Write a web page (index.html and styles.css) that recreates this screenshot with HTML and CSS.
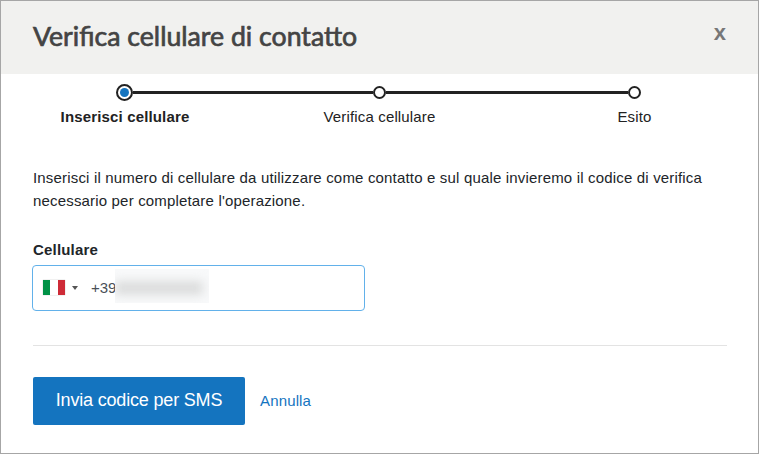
FILE: index.html
```html
<!DOCTYPE html>
<html lang="it">
<head>
<meta charset="utf-8">
<title>Verifica cellulare di contatto</title>
<link rel="stylesheet" href="styles.css">
</head>
<body>
<main class="dialog">
  <header class="header">
    <h1 class="title">Verifica cellulare di contatto</h1>
    <button class="close" type="button">x</button>
  </header>
  <ol class="stepper">
    <li class="step current"><div class="track"><span class="dot"></span></div><span class="label">Inserisci cellulare</span></li>
    <li class="step"><div class="track"><span class="dot"></span></div><span class="label">Verifica cellulare</span></li>
    <li class="step"><div class="track"><span class="dot"></span></div><span class="label">Esito</span></li>
  </ol>
  <section class="content">
    <p class="intro">Inserisci il numero di cellulare da utilizzare come contatto e sul quale invieremo il codice di verifica<br>necessario per completare l'operazione.</p>
    <div class="field-label">Cellulare</div>
    <div class="field">
      <span class="flag"></span>
      <span class="caret"></span>
      <span class="prefix">+39</span>
      <span class="masked"><span class="smudge"></span></span>
    </div>
    <footer class="actions">
      <button class="submit" type="button">Invia codice per SMS</button>
      <a class="cancel">Annulla</a>
    </footer>
  </section>
</main>
</body>
</html>
```
FILE: styles.css
```css
* { box-sizing: border-box; }
body {
  margin: 0;
  font: 15px/23px "Liberation Sans", Arial, sans-serif;
  color: #212529;
}
.dialog {
  width: 759px;
  height: 454px;
  border: 1px solid #a6a6a6;
  background: #fff;
  overflow: hidden;
}
.header {
  display: flex;
  justify-content: space-between;
  height: 73px;
  padding: 15px 32px 0 32px;
  background: #f1f1ef;
}
.title {
  margin: 0;
  font: 400 26.67px/40px Lato, sans-serif;
  color: #444;
  -webkit-text-stroke: 0.7px #444;
}
.close {
  height: 34px;
  padding: 0;
  border: 0;
  background: none;
  font: bold 22px/32px "Liberation Sans", Arial, sans-serif;
  color: #777;
}
.stepper {
  display: grid;
  grid-template-columns: repeat(3, 255px);
  margin: 0 -4px;
  padding: 9px 0 0;
  list-style: none;
  color: #222;
}
.step { text-align: center; }
.track {
  display: grid;
  grid-template-columns: 1fr auto 1fr;
  align-items: center;
  height: 19px;
}
.track::before, .track::after {
  content: "";
  height: 3px;
  background: #222;
}
.step:first-child .track::before, .step:last-child .track::after { background: none; }
.dot {
  width: 13px;
  height: 13px;
  border: 2px solid #222;
  border-radius: 50%;
  background: #fff;
}
.current .dot {
  width: 17px;
  height: 17px;
  padding: 2px;
  background: #1474bf content-box;
}
.label {
  display: block;
  margin-top: 3px;
  letter-spacing: 0.15px;
}
.current .label { padding-left: 1px; font-weight: bold; }
.content { padding: 38px 31px 0 32px; }
.intro {
  margin: 0;
  letter-spacing: 0.172px;
  white-space: nowrap;
}
.field-label {
  margin-top: 26px;
  font-weight: bold;
  letter-spacing: 0.18px;
}
.field {
  display: flex;
  align-items: center;
  width: 333px;
  height: 46px;
  margin: 4px 0 0 -1px;
  padding: 0 0 1px 10px;
  border: 1px solid #62b1ea;
  border-radius: 4px;
  color: #495057;
}
.flag {
  width: 22px;
  height: 15px;
  background: linear-gradient(90deg, #009246 0 7px, #fff 7px 15px, #ce2b37 15px);
  box-shadow: 0 0 1px #aaa;
}
.caret {
  margin-left: 7px;
  border: 3px solid transparent;
  border-top: 4px solid #555;
  border-bottom: 0;
}
.prefix { margin-left: 13px; }
.masked {
  display: flex;
  align-items: center;
  width: 94px;
  height: 34px;
  margin-left: -1px;
  margin-top: -3px;
  background: #f8f9fa;
  overflow: hidden;
}
.smudge {
  width: 88px;
  height: 14px;
  margin-top: 3px;
  background: #dcdddd;
  filter: blur(5px);
}
.actions {
  display: flex;
  align-items: center;
  margin-top: 34px;
  padding-top: 31px;
  border-top: 1px solid #e3e3e3;
}
.submit {
  width: 212px;
  height: 48px;
  padding: 0 0 2px;
  border: 0;
  border-radius: 2px;
  background: #1474bf;
  color: #fff;
  font: 18px "Liberation Sans", Arial, sans-serif;
  letter-spacing: -0.18px;
}
.cancel {
  margin-left: 15px;
  padding-bottom: 2px;
  color: #1474bf;
  letter-spacing: 0.15px;
}
```
